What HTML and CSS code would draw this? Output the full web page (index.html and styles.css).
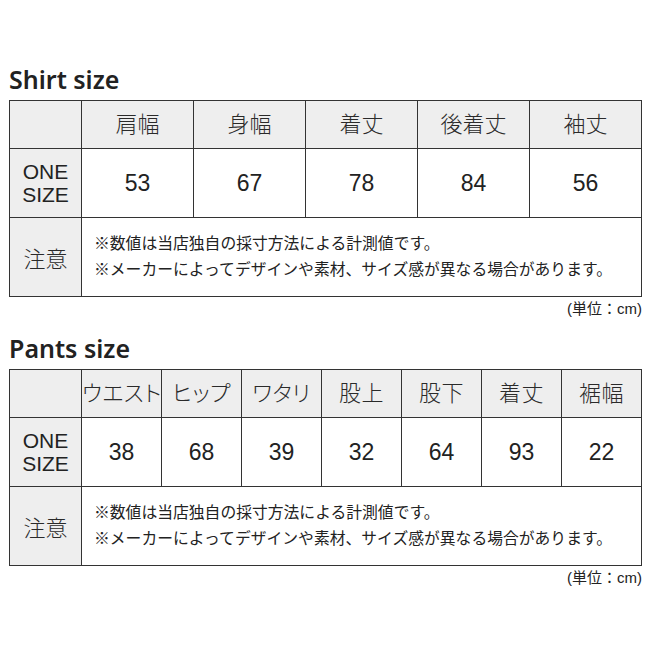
FILE: index.html
```html
<!DOCTYPE html>
<html lang="ja">
<head>
<meta charset="utf-8">
<link rel="stylesheet" href="styles.css">
</head>
<body>
<div class="page">
  <section class="block">
    <h2 class="title">Shirt size</h2>
    <table class="size shirt">
      <colgroup><col class="c-label"><col><col><col><col><col></colgroup>
      <tr class="head"><th class="label"></th><th>肩幅</th><th>身幅</th><th>着丈</th><th>後着丈</th><th>袖丈</th></tr>
      <tr class="data"><th class="label one">ONE<br>SIZE</th><td>53</td><td>67</td><td>78</td><td>84</td><td>56</td></tr>
      <tr class="note"><th class="label jp">注意</th><td colspan="5" class="note-text">※数値は当店独自の採寸方法による計測値です。<br>※メーカーによってデザインや素材、サイズ感が異なる場合があります。</td></tr>
    </table>
    <p class="unit">(単位：cm)</p>
  </section>
  <section class="block pants-block">
    <h2 class="title">Pants size</h2>
    <table class="size pants">
      <colgroup><col class="c-label"><col><col><col><col><col><col><col></colgroup>
      <tr class="head"><th class="label"></th><th>ウエスト</th><th>ヒップ</th><th>ワタリ</th><th>股上</th><th>股下</th><th>着丈</th><th>裾幅</th></tr>
      <tr class="data"><th class="label one">ONE<br>SIZE</th><td>38</td><td>68</td><td>39</td><td>32</td><td>64</td><td>93</td><td>22</td></tr>
      <tr class="note"><th class="label jp">注意</th><td colspan="7" class="note-text">※数値は当店独自の採寸方法による計測値です。<br>※メーカーによってデザインや素材、サイズ感が異なる場合があります。</td></tr>
    </table>
    <p class="unit">(単位：cm)</p>
  </section>
</div>
</body>
</html>
```
FILE: styles.css
```css
html, body {
  margin: 0;
  padding: 0;
  background: #fff;
}
body {
  font-family: "Liberation Sans", "Noto Sans CJK JP", sans-serif;
  color: #222;
}
.page {
  padding: 64px 8px 0 9px;
  width: 633px;
}
.title {
  margin: 0 0 5px 0;
  font-size: 25px;
  line-height: 31px;
  font-weight: 600;
  color: #222;
  font-family: "Noto Sans", "Liberation Sans", sans-serif;
}
.pants-block {
  margin-top: 12px;
}
.size {
  width: 633px;
  border-collapse: collapse;
  table-layout: fixed;
  border: 1px solid #333;
}
.c-label {
  width: 72px;
}
.size th, .size td {
  border: 1px solid #333;
  text-align: center;
  vertical-align: middle;
  font-weight: normal;
  padding: 0;
  white-space: nowrap;
}
.size .head th {
  background: #eeeeee;
  height: 47px;
  font-size: 22px;
  line-height: 26px;
  font-weight: 300;
  color: #2a2a2a;
}
.label {
  background: #eeeeee;
}
.size .jp {
  font-size: 22px;
  font-weight: 300;
  color: #2a2a2a;
}
.one {
  font-size: 21px;
  line-height: 23px;
}
.data td {
  height: 68px;
  font-size: 23px;
}
.data th {
  height: 68px;
}
.note th {
  height: 78px;
}
.note-text {
  text-align: left !important;
  padding-left: 12px !important;
  font-size: 15.8px;
  line-height: 26px;
}
.pants .head th:not(.label) {
  font-feature-settings: "palt";
  letter-spacing: 0.5px;
}
.unit {
  margin: 0;
  text-align: right;
  font-size: 15px;
  line-height: 24px;
  color: #222;
}
```
